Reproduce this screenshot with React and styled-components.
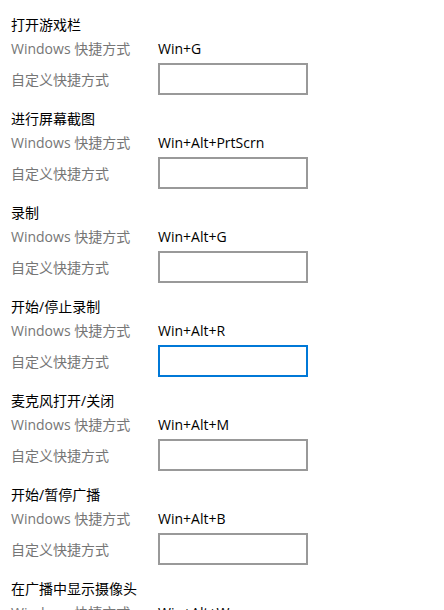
import React from "react";
import styled, { createGlobalStyle } from "styled-components";

const Global = createGlobalStyle`
  html, body { margin: 0; padding: 0; background: #fff; }
  body {
    font-family: "Segoe UI", "Open Sans", "Noto Sans CJK SC", sans-serif;
    font-size: 14px;
    color: #000;
  }
`;

const Page = styled.div`
  padding: 13px 0 0 11px;
  width: 433px;
  height: 597px;
  overflow: hidden;
`;

const Section = styled.section`
  display: flex;
  flex-direction: column;
  padding-bottom: 12px;
`;

const Title = styled.div`
  height: 24px;
  line-height: 24px;
  color: #000;
`;

const Row = styled.div`
  display: grid;
  grid-template-columns: 147px 150px;
  align-items: center;
  height: ${(p) => p.$h}px;
  margin-top: ${(p) => p.$mt || 0}px;
`;

const Label = styled.span`
  color: #767676;
  white-space: nowrap;
`;

const Value = styled.span`
  color: #000;
  white-space: nowrap;
`;

const Input = styled.input`
  box-sizing: border-box;
  width: 150px;
  height: 32px;
  margin: 0;
  padding: 0 8px;
  border: 2px solid ${(p) => (p.$focused ? "#0078d7" : "#999999")};
  background: #fff;
  outline: none;
  font: inherit;
`;

const items = [
  { title: "打开游戏栏", keys: "Win+G" },
  { title: "进行屏幕截图", keys: "Win+Alt+PrtScrn" },
  { title: "录制", keys: "Win+Alt+G" },
  { title: "开始/停止录制", keys: "Win+Alt+R", focused: true },
  { title: "麦克风打开/关闭", keys: "Win+Alt+M" },
  { title: "开始/暂停广播", keys: "Win+Alt+B" },
  { title: "在广播中显示摄像头", keys: "Win+Alt+W" },
];

export default function App() {
  return (
    <>
      <Global />
      <Page>
        {items.map((it) => (
          <Section key={it.title}>
            <Title>{it.title}</Title>
            <Row $h={22}>
              <Label>Windows 快捷方式</Label>
              <Value>{it.keys}</Value>
            </Row>
            <Row $h={32} $mt={4}>
              <Label>自定义快捷方式</Label>
              <Input $focused={it.focused} readOnly />
            </Row>
          </Section>
        ))}
      </Page>
    </>
  );
}
